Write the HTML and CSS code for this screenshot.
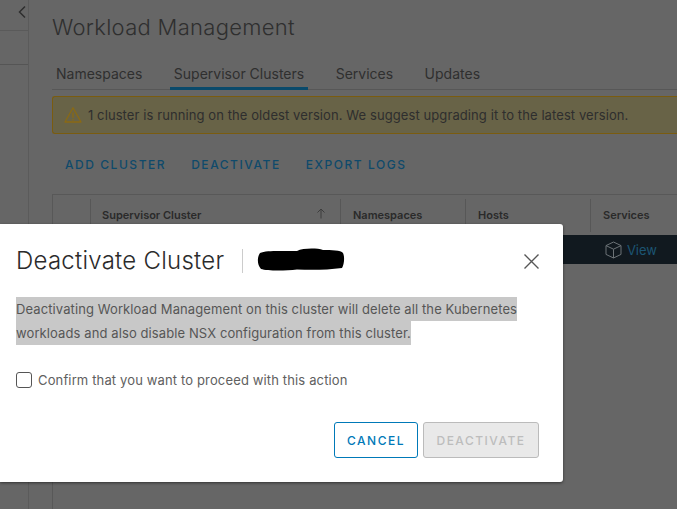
FILE: index.html
```html
<!DOCTYPE html>
<html lang="en">
<head>
<meta charset="utf-8">
<title>Workload Management</title>
<link rel="stylesheet" href="styles.css">
</head>
<body>
<div class="app">
  <aside class="side">
    <div class="side-top">
      <svg class="chev" width="10" height="14" viewBox="0 0 10 14"><path d="M8 1.500 2.500 7 8 12.500" fill="none" stroke="#2e2e2e" stroke-width="1.500"/></svg>
    </div>
    <div class="side-band"></div>
    <div class="side-tree"></div>
  </aside>
  <main class="main">
    <h1 class="page-title">Workload Management</h1>
    <nav class="tabs">
      <a class="tab">Namespaces</a>
      <a class="tab tab-active">Supervisor Clusters</a>
      <a class="tab">Services</a>
      <a class="tab">Updates</a>
    </nav>
    <div class="alert">
      <svg class="alert-icon" width="18" height="18" viewBox="0 0 18 18"><path d="M9 1.800 17 16H1Z" fill="none" stroke="#8a6a14" stroke-width="1.300" stroke-linejoin="round"/><path d="M9 6.500V12" stroke="#8a6a14" stroke-width="1.300"/><circle cx="9" cy="13.900" r=".8" fill="#8a6a14"/></svg>
      <span>1 cluster is running on the oldest version. We suggest upgrading it to the latest version.</span>
    </div>
    <div class="actions">
      <a class="action">ADD CLUSTER</a>
      <a class="action">DEACTIVATE</a>
      <a class="action">EXPORT LOGS</a>
    </div>
    <div class="grid">
      <div class="grid-head">
        <div class="cell cell-select"></div>
        <div class="cell cell-name"><span>Supervisor Cluster</span><svg width="10" height="11" viewBox="0 0 10 11"><path d="M5 10.500V1M1.500 4.500 5 1l3.500 3.500" fill="none" stroke="#3d3d3d"/></svg></div>
        <div class="cell cell-ns">Namespaces</div>
        <div class="cell cell-hosts">Hosts</div>
        <div class="cell cell-svc">Services</div>
      </div>
      <div class="grid-row">
        <div class="view">
          <svg width="17" height="18" viewBox="0 0 17 18"><path d="M8.500 1 16 4.600v8.800L8.500 17 1 13.400V4.600ZM1 4.600 8.500 8.200 16 4.600M8.500 8.200V17" fill="none" stroke="#6c7377" stroke-width="1"/></svg>
          <span>View</span>
        </div>
      </div>
    </div>
  </main>
</div>
<section class="modal">
  <header class="modal-head">
    <h2 class="modal-title">Deactivate Cluster</h2>
    <svg class="redact" width="88" height="24" viewBox="0 0 88 24"><path d="M3 5C10 2 28 3.500 40 3 46 0 60 0 66 2 74 2 84 2 86 5 88 9 87 17 85 20 70 22 55 22 40 21.500 28 23 10 23 4 21 0 17 0 9 3 5Z" fill="#000"/></svg>
    <svg class="close" width="15" height="15" viewBox="0 0 15 15"><path d="M.5.5 14.500 14.500M14.500.5.500 14.500" fill="none" stroke="#565656" stroke-width="1.400"/></svg>
  </header>
  <p class="modal-text"><mark class="selected">Deactivating Workload Management on this cluster will delete all the Kubernetes<br>workloads and also disable NSX configuration from this cluster.</mark></p>
  <label class="confirm"><span class="box"></span>Confirm that you want to proceed with this action</label>
  <footer class="modal-foot">
    <button class="btn btn-outline">CANCEL</button>
    <button class="btn btn-disabled">DEACTIVATE</button>
  </footer>
</section>
</body>
</html>
```
FILE: styles.css
```css
* { box-sizing: border-box; }
html, body { margin: 0; height: 100%; overflow: hidden; }
body { background: #666; font-family: "Inter", "Noto Sans", sans-serif; color: #303030; position: relative; }
.app { display: flex; height: 509px; overflow: hidden; }
.side { width: 29px; flex: none; border-right: 1px solid #5b5b5b; }
.side-top { height: 31px; border-bottom: 1px solid #5a5a5a; padding: 5px 0 0 17px; }
.chev { display: block; }
.side-band { height: 34px; border-bottom: 1px solid #555; }
.main { flex: 1; min-width: 0; padding: 13px 0 0 23px; display: flex; flex-direction: column; }
.page-title { margin: 0; font-size: 22px; line-height: 28px; font-weight: 300; letter-spacing: .3px; color: #2f2f2f; }
.tabs { display: flex; gap: 23.500px; margin-top: 22px; height: 27px; border-bottom: 1px solid #575757; }
.tab { font-size: 14px; line-height: 22px; padding: 0 4px; height: 27px; color: #2f2f2f; }
.tab-active { border-bottom: 3px solid #0a4a6b; }
.alert { display: flex; align-items: center; gap: 6px; height: 38px; margin-top: 6px; padding-left: 11px; background: #686347; border: 1px solid #7a5c10; border-width: 1px 0 1px 1px; border-radius: 3px 0 0 3px; font-size: 13px; letter-spacing: .09px; color: #2e2e2e; }
.alert-icon { flex: none; }
.actions { display: flex; gap: 25px; margin-top: 23px; padding-left: 13px; }
.action { font-size: 12px; line-height: 16px; letter-spacing: 1.550px; font-weight: 500; color: #0f4a6b; }
.grid { margin-top: 21px; border-left: 1px solid #585858; flex: 1; }
.grid-head { display: flex; height: 41px; border-top: 1px solid #585858; padding-top: 4px; }
.cell { height: 33px; border-left: 1px solid #575757; padding: 9px 0 0 12px; font-size: 11px; font-weight: 600; color: #2a2a2a; line-height: 14px; }
.cell-select { width: 37px; border-left: 0; padding: 0; }
.cell-name { width: 250px; display: flex; justify-content: space-between; padding-left: 11px; padding-right: 14px; }
.cell-ns { width: 125px; }
.cell-hosts { width: 125px; }
.cell-svc { flex: 1; }
.grid-row { height: 29px; background: #11191f; display: flex; justify-content: flex-end; align-items: center; padding-right: 20px; }
.view { display: flex; align-items: center; gap: 5px; font-size: 13px; color: #1c5573; }
.modal { position: absolute; left: 0; top: 224px; width: 563px; height: 258px; background: #fff; border-radius: 0 3px 3px 0; box-shadow: 0 1px 3px rgba(0,0,0,.5); padding: 0 24px 0 16px; }
.modal-head { display: flex; align-items: center; height: 73px; }
.modal-title { margin: 0; font-size: 24px; font-weight: 300; letter-spacing: .25px; color: #2b2b2b; line-height: 24px; padding-right: 18px; border-right: 1px solid #ccc; }
.redact { margin: -2px 0 0 14px; }
.close { margin-left: auto; margin-top: 2px; }
.modal-text { margin: 0; font-size: 13px; line-height: 24px; letter-spacing: .1px; color: #565656; }
.selected { background: #c8c8c8; color: #565656; padding: 4px 0; }
.confirm { display: flex; align-items: center; gap: 6px; margin-top: 26px; font-size: 13px; line-height: 18px; letter-spacing: .14px; color: #606060; }
.box { width: 16px; height: 16px; border: 1px solid #555; border-radius: 3px; }
.modal-foot { display: flex; justify-content: flex-end; gap: 5px; margin-top: 33px; }
.btn { height: 36px; font: 500 12px "Inter", sans-serif; letter-spacing: 1.500px; border-radius: 3px; background: #fff; padding: 0; }
.btn-outline { width: 84px; border: 1px solid #0079b8; color: #0079b8; }
.btn-disabled { width: 116px; border: 1px solid #bbb; background: #e9e9e9; color: #bdbdbd; }
```
